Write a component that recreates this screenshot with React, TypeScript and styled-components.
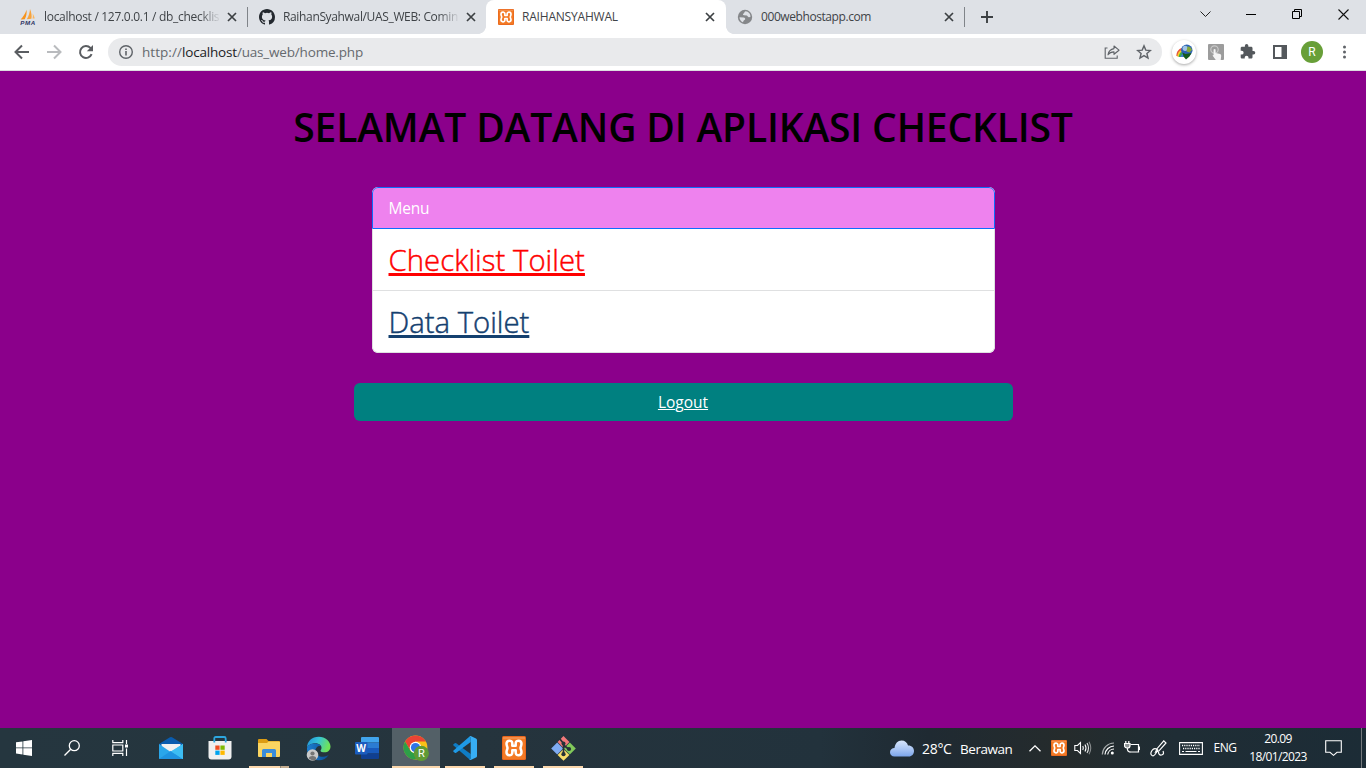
import React from 'react';
import styled, { createGlobalStyle, css } from 'styled-components';

const GlobalStyle = createGlobalStyle`
  * { box-sizing: border-box; }
  body { margin: 0; background: #fff; font-family: 'Open Sans', 'Noto Sans', sans-serif; }
  svg { display: block; flex: none; }
`;

/* ---------- shell ---------- */

const Desktop = styled.div`
  width: 1366px;
  height: 768px;
  display: flex;
  flex-direction: column;
  overflow: hidden;
`;

/* ---------- tab strip ---------- */

const TabStrip = styled.header`
  height: 34px;
  flex: none;
  display: flex;
  background: #dee1e6;
  padding-left: 8px;
`;

const Tab = styled.div<{ $active?: boolean; $divider?: boolean; $width: number }>`
  position: relative;
  width: ${p => p.$width}px;
  height: 34px;
  display: flex;
  align-items: center;
  padding: 0 7px 0 12px;
  ${p => p.$active && css`
    z-index: 1;
    margin-right: -1px;
    background: #fff;
    border-radius: 8px 8px 0 0;
    &::before, &::after {
      content: '';
      position: absolute;
      bottom: 0;
      width: 8px;
      height: 8px;
    }
    &::before { left: -8px; background: radial-gradient(circle at 0 0, #dee1e6 7.6px, #fff 8.2px); }
    &::after { right: -8px; background: radial-gradient(circle at 100% 0, #dee1e6 7.6px, #fff 8.2px); }
  `}
  ${p => p.$divider && css`
    &::after {
      content: '';
      position: absolute;
      right: -1px;
      top: 7px;
      width: 1px;
      height: 20px;
      background: #808489;
    }
  `}
`;

const TabTitle = styled.span<{ $spacing: number; $fade?: boolean }>`
  width: 175px;
  margin-left: 8px;
  margin-right: 5px;
  overflow: hidden;
  white-space: nowrap;
  font-size: 12px;
  line-height: 18px;
  letter-spacing: ${p => p.$spacing}px;
  color: #3f4347;
  ${p => p.$fade && css`
    mask-image: linear-gradient(90deg, #000 155px, transparent 177px);
  `}
`;

const TabClose = styled.span`
  width: 16px;
  height: 16px;
  display: grid;
  place-items: center;
`;

const NewTab = styled.div`
  width: 46px;
  display: grid;
  place-items: center;
`;

const WindowButtons = styled.div`
  margin-left: auto;
  height: 28px;
  display: flex;
`;

const WindowButton = styled.div`
  width: 46px;
  display: grid;
  place-items: center;
`;

/* ---------- toolbar ---------- */

const Toolbar = styled.div`
  height: 37px;
  flex: none;
  display: flex;
  align-items: center;
  background: #fff;
  border-bottom: 1px solid #dcdde0;
  padding: 0 5px 0 6px;
`;

const ToolButton = styled.div`
  width: 32px;
  height: 28px;
  display: grid;
  place-items: center;
`;

const Omnibox = styled.div`
  width: 1054px;
  height: 28px;
  margin: 0 6px;
  display: flex;
  align-items: center;
  border-radius: 14px;
  background: #e9eaec;
  padding: 0 2px 0 10px;
`;

const Url = styled.div`
  flex: 1;
  margin-left: 8px;
  font-size: 13.5px;
  line-height: 20px;
  letter-spacing: -0.18px;
  color: #65696e;
  white-space: nowrap;
`;

const Scheme = styled.span`
  letter-spacing: 0.05px;
`;

const Host = styled.span`
  color: #202124;
`;

const ExtensionDisc = styled.div`
  width: 24px;
  height: 24px;
  border-radius: 50%;
  display: grid;
  place-items: center;
  background: #fff;
  box-shadow: 0 1px 3px rgba(0, 0, 0, 0.35);
`;

const Avatar = styled.div`
  width: 22px;
  height: 22px;
  border-radius: 50%;
  background: #689f38;
  color: #fff;
  font: 400 12px/22px Roboto, sans-serif;
  text-align: center;
`;

/* ---------- page ---------- */

const Page = styled.main`
  flex: 1;
  display: flex;
  flex-direction: column;
  align-items: center;
  background: #8b008b;
  padding-top: 32px;
`;

const Title = styled.h1`
  margin: 0 0 36px;
  font-size: 39px;
  font-weight: 600;
  line-height: 48px;
  letter-spacing: -0.15px;
  color: #000;
  white-space: nowrap;
`;

const MenuList = styled.ul`
  list-style: none;
  width: 623px;
  margin: 0 0 30px;
  padding: 0;
  border-radius: 6px;
  overflow: hidden;
  background: #fff;
`;

const MenuHeader = styled.li`
  height: 42px;
  padding: 8px 16px;
  border: 1px solid #0d6efd;
  border-radius: 6px 6px 0 0;
  background: #ee82ee;
  color: #fff;
  font-size: 15.5px;
  line-height: 25px;
  letter-spacing: -0.25px;
`;

const MenuItem = styled.li`
  height: 62px;
  padding: 9px 16px 7px;
  border: 1px solid #dfe0e1;
  border-top: 0;
  line-height: 45px;
  &:last-child { border-radius: 0 0 6px 6px; }
`;

const MenuLink = styled.a<{ $color: string; $spacing: number }>`
  color: ${p => p.$color};
  font-size: 29.3px;
  font-weight: 300;
  letter-spacing: ${p => p.$spacing}px;
  -webkit-text-stroke: 0.45px ${p => p.$color};
  text-decoration: underline;
  text-decoration-thickness: 3px;
  text-underline-offset: 2px;
  text-decoration-skip-ink: none;
`;

const LogoutButton = styled.button`
  width: 659px;
  height: 38px;
  border: 0;
  border-radius: 6px;
  background: #008080;
  padding: 0 0 1px;
  color: #fff;
  font: 400 15.5px/24px 'Open Sans', sans-serif;
  text-decoration: underline;
  text-decoration-thickness: 1px;
  text-underline-offset: 1px;
`;

/* ---------- taskbar ---------- */

const Taskbar = styled.footer`
  height: 40px;
  flex: none;
  display: flex;
  background: linear-gradient(90deg, #25363f 0%, #25343d 35%, #22323c 60%, #1f2a32 68%, #252b2c 78%, #1f2d35 86%, #1c2c36 100%);
  color: #fff;
`;

const SystemButton = styled.div`
  width: 48px;
  display: grid;
  place-items: center;
`;

const AppStrip = styled.div`
  display: flex;
  gap: 1px;
  margin-left: 3px;
`;

const AppButton = styled.div<{ $open?: boolean; $active?: boolean; $stacked?: boolean }>`
  position: relative;
  width: 48px;
  display: grid;
  place-items: center;
  background: ${p => (p.$active ? '#536067' : 'transparent')};
  ${p => (p.$open || p.$active) && css`
    &::after {
      content: '';
      position: absolute;
      bottom: 0;
      left: ${p.$active ? 0 : 4}px;
      right: ${p.$active ? 0 : 4}px;
      height: 2px;
      background: ${p.$stacked ? 'linear-gradient(90deg, #fbd7ac 31px, #8f8573 31px, #8f8573 32px, #c4ad90 32px)' : '#fbd7ac'};
    }
  `}
`;

const Tray = styled.div`
  margin-left: auto;
  display: flex;
  align-items: center;
`;

const Weather = styled.div`
  width: 135px;
  display: flex;
  align-items: center;
  font-size: 14px;
  line-height: 20px;
  white-space: nowrap;
`;

const Temperature = styled.span`
  width: 38px;
  margin-left: 8px;
  padding-top: 1px;
  letter-spacing: -0.3px;
`;

const Condition = styled.span`
  padding-top: 1px;
  font-size: 13.5px;
  letter-spacing: -0.45px;
`;

const TrayCell = styled.div<{ $width: number }>`
  width: ${p => p.$width}px;
  height: 40px;
  display: grid;
  place-items: center;
`;

const Language = styled.div`
  width: 28px;
  margin-left: 4px;
  font-size: 12px;
  line-height: 16px;
  letter-spacing: -0.5px;
  text-align: center;
`;

const Clock = styled.div`
  width: 78px;
  padding-bottom: 1px;
  font-size: 12px;
  line-height: 18px;
  letter-spacing: -0.6px;
  text-align: center;
`;

const ShowDesktop = styled.div`
  width: 5px;
  height: 40px;
  border-left: 1px solid #74797d;
`;

/* ---------- icons ---------- */

const CloseIcon = () => (
  <svg width="10" height="10" viewBox="0 0 10 10" stroke="#3c4043" strokeWidth="1.7"><path d="M1 1l8 8M9 1L1 9" /></svg>
);

const PmaIcon = () => (
  <svg width="16" height="16" viewBox="0 0 16 16">
    <path d="M6.5 0.8C7 4 6.3 7.5 4.8 10.2L0.6 10.6C3 8 5.5 4.500 6.500 0.800z" fill="#f7941d" />
    <path d="M10 0C11.500 3.500 12 7 11.400 9.700L6.800 10.300C8.800 7 9.800 3.500 10 0z" fill="#f9a33a" />
    <path d="M12.600 4.500C13.700 6.200 14.500 8 14.700 9.500L12.500 9.600C13 7.900 13 6 12.600 4.500z" fill="#fbb65c" />
    <text x="0.200" y="15.600" fontFamily="Liberation Sans" fontSize="6.200" fontWeight="700" fontStyle="italic" textLength="15" fill="#2f3564">PMA</text>
  </svg>
);

const GithubIcon = () => (
  <svg width="16" height="16" viewBox="0 0 16 16" fill="#24292f">
    <path d="M8 0C3.580 0 0 3.580 0 8c0 3.540 2.290 6.530 5.470 7.590.4.070.550-.170.550-.380 0-.190-.010-.820-.010-1.490-2.010.370-2.530-.490-2.690-.940-.090-.230-.480-.940-.820-1.130-.280-.150-.680-.520-.010-.530.630-.010 1.080.580 1.230.820.720 1.210 1.870.870 2.330.660.070-.520.280-.870.510-1.070-1.780-.2-3.640-.890-3.640-3.950 0-.870.310-1.590.820-2.150-.080-.2-.360-1.020.080-2.120 0 0 .670-.210 2.200.820a7.600 7.600 0 0 1 4 0c1.530-1.040 2.200-.820 2.200-.820.440 1.100.160 1.920.080 2.120.510.560.820 1.270.820 2.150 0 3.070-1.870 3.750-3.650 3.950.290.250.540.730.540 1.480 0 1.070-.010 1.930-.010 2.200 0 .210.150.460.550.380A8.010 8.010 0 0 0 16 8c0-4.420-3.580-8-8-8z" />
  </svg>
);

const XamppIcon = ({ size }: { size: number }) => (
  <svg width={size} height={size} viewBox="0 0 24 24">
    <rect width="24" height="24" rx="1.500" fill="#e9661c" />
    <rect x="1" y="1" width="22" height="22" rx="1" fill="#f37a25" />
    <path d="M1 1h22v2H1z" fill="#f39b62" opacity=".6" />
    <path d="M10.300 9.700V7.200C10.300 3.900 4.500 3.900 4.500 7.800C4.500 9.700 5.500 10.500 5.500 12C5.500 13.500 4.500 14.300 4.500 16.200C4.500 20.100 10.300 20.100 10.300 16.800V14.300H13.700V16.800C13.700 20.100 19.500 20.100 19.500 16.200C19.500 14.300 18.500 13.500 18.500 12C18.500 10.500 19.500 9.700 19.500 7.800C19.500 3.900 13.700 3.900 13.700 7.200V9.700z" fill="none" stroke="#fff" strokeWidth="2.500" strokeLinejoin="round" />
  </svg>
);

const GlobeIcon = () => (
  <svg width="16" height="16" viewBox="0 0 16 16">
    <circle cx="8" cy="8" r="7.200" fill="#85878a" />
    <path d="M8.600 2.300C7 3 7.600 4 6.600 4.400C5.600 4.800 5.800 6 7 6.200L9.800 6.600C11 7 10.500 8 11.700 8.200L13.400 8C13.700 5 11.600 2.600 8.600 2.300z" fill="#dee1e6" />
    <path d="M2.500 8.200L6.500 8.400C8 8.600 8.600 9.600 8 10.500C7.500 11.300 6.600 11.200 6.300 12.400L5.900 13.300C3.900 12.500 2.500 10.400 2.500 8.200z" fill="#dee1e6" />
  </svg>
);

const BackIcon = ({ color, flip }: { color: string; flip?: boolean }) => (
  <svg width="16" height="16" viewBox="0 0 16 16" fill="none" stroke={color} strokeWidth="2">
    <path d={flip ? 'M1 8h13M8 1.500L14.500 8L8 14.500' : 'M15 8H2M8 1.500L1.500 8L8 14.500'} />
  </svg>
);

const ReloadIcon = () => (
  <svg width="16" height="16" viewBox="0 0 16 16">
    <path d="M13.600 10.200A6 6 0 1 1 12.400 3.900L14 5.500" fill="none" stroke="#5a5d61" strokeWidth="2" />
    <path d="M15 1v6.200H8.800z" fill="#5a5d61" />
  </svg>
);

const InfoIcon = () => (
  <svg width="16" height="16" viewBox="0 0 16 16">
    <circle cx="8" cy="8" r="6.300" fill="none" stroke="#5f6368" strokeWidth="1.400" />
    <path d="M7.200 7h1.600v4.500H7.200zM7.200 4.400h1.600V6H7.200z" fill="#5f6368" />
  </svg>
);

const ShareIcon = () => (
  <svg width="16" height="16" viewBox="0 0 16 16" fill="none" stroke="#5f6368" strokeWidth="1.100">
    <path d="M3.500 4H1.200v10.300h12V11.500" />
    <path d="M10 2l5 4.200-5 4.100V7.900C7.300 7.900 5.400 8.800 4 10.800C4.500 7.500 6.500 5.200 10 4.600z" strokeLinejoin="round" />
  </svg>
);

const StarIcon = () => (
  <svg width="16" height="16" viewBox="0 0 16 16" fill="none" stroke="#5f6368" strokeWidth="1.400">
    <path d="M8 1.900l1.800 4.200 4.600.4-3.500 3 1.100 4.500L8 11.600 4 14l1.100-4.500-3.500-3 4.600-.4z" />
  </svg>
);

const IdmIcon = () => (
  <svg width="17" height="16" viewBox="0 0 17 16">
    <path d="M.3 12C.5 6.500 4 3.300 9 3.800L8 13z" fill="#e5533c" />
    <path d="M1.300 12.500C1.500 8 4.500 5 9 5.500L8 13z" fill="#f5d327" />
    <path d="M2.700 13C3 9.500 5 7 9 7.300L8 13z" fill="#35a853" />
    <path d="M4.500 13C5 11 6 9.500 9 9.500L8 13z" fill="#3f7fd0" />
    <circle cx="10.800" cy="6.300" r="5.700" fill="#2c63b5" />
    <circle cx="9.200" cy="4.300" r="2.600" fill="#9fc4e6" />
    <path d="M11.500 2.500c2-.5 4 1.500 4.500 3.500l-2.500 2.500-3-1z" fill="#84a83a" />
    <path d="M6.500 8.500l3 1.500 6-1-2 3.500-3.500 3-2.500-3z" fill="#155d1c" />
  </svg>
);

const TouchIcon = () => (
  <svg width="16" height="16" viewBox="0 0 16 16">
    <rect width="16" height="16" rx="1" fill="#9c9c9c" />
    <circle cx="6.500" cy="5.500" r="3.700" fill="none" stroke="#c9c9c9" strokeWidth="1.200" />
    <path d="M5.600 5.500q1-1.200 2 0V9l4.500 1q1.300.4 1.100 2L12.700 16H7.800L4.500 11.600l1.100-.6z" fill="#f4f4f4" />
  </svg>
);

const PuzzleIcon = () => (
  <svg width="16" height="16" viewBox="1 1 23 23" fill="#54585c">
    <path d="M20.500 11H19V7c0-1.100-.9-2-2-2h-4V3.500a2.500 2.500 0 0 0-5 0V5H4c-1.100 0-2 .9-2 2v3.800h1.500a2.700 2.700 0 0 1 0 5.400H2V20c0 1.100.9 2 2 2h3.800v-1.500a2.700 2.700 0 0 1 5.400 0V22H17c1.100 0 2-.9 2-2v-4h1.500a2.500 2.500 0 0 0 0-5z" />
  </svg>
);

const PanelIcon = () => (
  <svg width="14" height="14" viewBox="0 0 14 14">
    <path d="M0 0h14v14H0zM2 2v10h6.500V2z" fill="#54585c" fillRule="evenodd" />
  </svg>
);

const DotsIcon = () => (
  <svg width="4" height="14" viewBox="0 0 4 14" fill="#5f6368">
    <circle cx="2.500" cy="2" r="1.500" /><circle cx="2.500" cy="7" r="1.500" /><circle cx="2.500" cy="12" r="1.500" />
  </svg>
);

const WindowsIcon = () => (
  <svg width="16" height="16" viewBox="0 0 16 16" fill="#fff">
    <path d="M0 2.300l6.500-.9v6.100H0zM7.300 1.300L16 0v7.500H7.300zM0 8.300h6.500v6.200L0 13.600zM7.300 8.300H16V16l-8.700-1.300z" />
  </svg>
);

const SearchIcon = () => (
  <svg width="16" height="16" viewBox="0 0 16 16" fill="none" stroke="#fff" strokeWidth="1.300">
    <circle cx="10.300" cy="5.700" r="5" /><path d="M6.700 9.300L.5 15.500" />
  </svg>
);

const TaskViewIcon = () => (
  <svg width="17" height="16" viewBox="0 0 17 16" fill="none" stroke="#fff" strokeWidth="1.200">
    <path d="M.8 0v2.600h10V0M.8 16v-2.600h10V16M.8 5h10v6H.8zM14.500 0v4M14.500 8.500V16" />
    <path d="M13 4.500h3v3h-3z" fill="#fff" stroke="none" />
  </svg>
);

const MailIcon = () => (
  <svg width="24" height="22" viewBox="0 0 24 22">
    <path d="M0 7L11 .3q1-.6 2 0L24 7v6H0z" fill="#0a5cae" />
    <path d="M2.500 7h19v8h-19z" fill="#f1f1f1" />
    <path d="M0 7l12 8.200L0 22z" fill="#2aa6ea" />
    <path d="M24 7L0 22h24z" fill="#46c8f5" />
    <path d="M0 22h24L12 13.800z" fill="#1f93e0" />
    <path d="M12 14.500L24 7v15z" fill="#3dbdf2" />
  </svg>
);

const StoreIcon = () => (
  <svg width="24" height="24" viewBox="0 0 24 24">
    <path d="M.5 5h23v15.500q0 3-3 3h-17q-3 0-3-3z" fill="#f0f0f0" />
    <path d="M6.300 6.500V2.500q0-1.500 1.500-1.500h8.400q1.500 0 1.500 1.500v4" fill="none" stroke="#2da7e0" strokeWidth="1.800" />
    <path d="M7.300 9.500h4.300v4.300H7.300z" fill="#f04e22" /><path d="M12.400 9.500h4.300v4.300h-4.300z" fill="#7fba00" />
    <path d="M7.300 14.600h4.300v4.300H7.300z" fill="#00a4ef" /><path d="M12.400 14.600h4.300v4.300h-4.300z" fill="#ffb900" />
  </svg>
);

const ExplorerIcon = () => (
  <svg width="22" height="18" viewBox="0 0 22 18">
    <path d="M0 1q0-1 1-1h7.500l2 2H21q1 0 1 1v5H0z" fill="#dd9c12" />
    <path d="M0 4h9l1.500-1.500H21q1 0 1 1V17q0 1-1 1H1q-1 0-1-1z" fill="#fbd561" />
    <path d="M4 18v-6.500q0-1.500 1.500-1.500h11q1.500 0 1.500 1.500V18h-4v-4H8v4z" fill="#3a8ddb" />
  </svg>
);

const EdgeIcon = () => (
  <svg width="25" height="25" viewBox="0 0 25 25">
    <defs>
      <linearGradient id="edgeTop" x1="0" x2="1" y1="0" y2=".3"><stop offset="0" stopColor="#1f8fdb" /><stop offset=".5" stopColor="#36c3d8" /><stop offset="1" stopColor="#6ee35a" /></linearGradient>
      <linearGradient id="edgeLow" x1="0" x2="1"><stop offset="0" stopColor="#1b7fd2" /><stop offset="1" stopColor="#0c4d92" /></linearGradient>
    </defs>
    <path d="M1 12C1 5 6 .7 12.700.7C19.500.7 24.500 5.500 24.500 10.500C24.500 14 22 16.300 18.700 16.300C16.500 16.300 14.500 15.800 14.500 14.800C14.500 14 15.500 13.500 15.500 11.700C15.500 9.500 13 7.300 9.500 7.300C5 7.300 1.500 9.500 1 12z" fill="url(#edgeTop)" />
    <path d="M1 12.300C1.500 9.300 5 7.300 9.500 7.500C12.300 7.600 14.300 8.800 15 10.200C12 9.500 9.300 11.800 9.500 15C9.700 18.800 13.500 21.200 17.500 20.800C19.500 20.600 21.500 19.500 22.800 18.700C20.500 22.500 16.500 24.500 12.700 24.300C6 24 .7 19 1 12.300z" fill="url(#edgeLow)" />
    <circle cx="6.500" cy="19" r="5.800" fill="#c9c9c9" />
    <circle cx="6.500" cy="17.500" r="2.100" fill="#757575" /><path d="M2.800 22.500q0-2.600 3.700-2.600t3.700 2.600-3.700 2z" fill="#757575" />
  </svg>
);

const WordIcon = () => (
  <svg width="24" height="22" viewBox="0 0 24 22">
    <path d="M6 1q0-1 1-1h16q1 0 1 1v4.500H6z" fill="#41a5ee" /><path d="M6 5.500h18V11H6z" fill="#2b7cd3" />
    <path d="M6 11h18v5.500H6z" fill="#185abd" /><path d="M6 16.500h18V21q0 1-1 1H7q-1 0-1-1z" fill="#103f91" />
    <rect y="5" width="12.500" height="12.500" rx="1" fill="#1b5cbe" />
    <text x="6.200" y="14.800" textAnchor="middle" fontFamily="Open Sans" fontWeight="700" fontSize="10" fill="#fff">W</text>
  </svg>
);

const ChromeIcon = () => (
  <svg width="26" height="26" viewBox="0 0 26 26">
    <circle cx="12.500" cy="12.500" r="11.900" fill="#fbc116" />
    <path d="M12.500 6.500h10.400A12 12 0 0 0 2.100 6.500L7.300 15.500z" fill="#ea4335" />
    <path d="M2.100 6.500L7.300 15.500a6 6 0 0 0 9 .8L12.500 24.500A12 12 0 0 1 2.100 6.500z" fill="#2d9f48" />
    <circle cx="12.500" cy="12.500" r="5.800" fill="#fff" /><circle cx="12.500" cy="12.500" r="4.600" fill="#2f74e8" />
    <circle cx="18.300" cy="18.300" r="7.600" fill="#5f9a35" />
    <text x="18.300" y="22.300" textAnchor="middle" fontFamily="Roboto" fontSize="11" fill="#fff">R</text>
  </svg>
);

const VscodeIcon = () => (
  <svg width="24" height="24" viewBox="0 0 24 24">
    <path d="M.5 8.300L1.800 7.200q.7-.5 1.400 0L17.700 18v5.800q-.8 0-1.400-.6L.5 9.600q-.6-.7 0-1.300z" fill="#0f7cc4" />
    <path d="M.5 15.700l1.300 1.100q.7.500 1.400 0L17.700 6V.2q-.8 0-1.400.6L.5 14.400q-.6.700 0 1.300z" fill="#1f9ae6" />
    <path d="M17.700.1L23 2.600q1 .5 1 1.500v15.800q0 1-1 1.500l-5.300 2.500q-1 .3-1.500-.5 1.300.4 1.500-1V1.600q-.2-1.400-1.500-1 .5-.8 1.500-.5z" fill="#37aef4" />
  </svg>
);

const GitIcon = () => (
  <svg width="25" height="25" viewBox="0 0 25 25">
    <path d="M12.500.1l5.900 5.900-5.900 5.900L6.600 6z" fill="#f2797a" /><path d="M6.200 6.400l6 6-6 6-6-6z" fill="#7fabf2" />
    <path d="M18.800 6.400l6 6-6 6-6-6z" fill="#81c95a" /><path d="M12.500 13l5.900 5.900-5.900 5.900-5.900-5.900z" fill="#f7dc6a" />
    <path d="M8.500 2.500l4 5v11M12.500 9l5.500 4.500" stroke="#253138" strokeWidth="1.700" fill="none" />
    <circle cx="12.500" cy="7.500" r="2" fill="#253138" /><circle cx="12.500" cy="18.200" r="2.100" fill="#253138" /><circle cx="18" cy="13" r="2.100" fill="#253138" />
  </svg>
);

const CloudIcon = () => (
  <svg width="24" height="17" viewBox="0 0 24 17">
    <defs><linearGradient id="cloud" x1="0" x2="0" y1="0" y2="1"><stop offset="0" stopColor="#d7e5fb" /><stop offset=".55" stopColor="#a9c5f4" /><stop offset="1" stopColor="#7ba4ea" /></linearGradient></defs>
    <path d="M4.500 16.500C1.800 16.500 0 14.500 0 12.200C0 9.800 2 8 4.500 8C5 3.500 7.800.5 11.500.5C15 .5 17.300 2.500 18 5.500C21.500 5.300 24 7.800 24 11C24 14 21.800 16.500 18.800 16.500z" fill="url(#cloud)" />
  </svg>
);

const VolumeIcon = () => (
  <svg width="18" height="14" viewBox="0 0 18 14" fill="none" stroke="#fff" strokeWidth="1.100">
    <path d="M.8 4.500h2.700L6.500 1.500v11l-3-3H.8z" /><path d="M8.800 5q1 2 0 4M11 3.500q2 3.500 0 7" />
    <path d="M13 2q3 5 0 10" opacity=".85" /><path d="M15 .7q3.500 6.300 0 12.600" opacity=".45" />
  </svg>
);

const WifiIcon = () => (
  <svg width="14" height="14" viewBox="0 0 14 14" fill="none" stroke="#fff" strokeWidth="1.200">
    <path d="M1.300 13.500A12 12 0 0 1 13 2" opacity=".6" /><path d="M4 13.500A9.300 9.300 0 0 1 13 5" />
    <path d="M6.700 13.500A6.500 6.500 0 0 1 13 8" /><circle cx="11.300" cy="12" r="1.500" fill="#fff" stroke="none" />
  </svg>
);

const BatteryIcon = () => (
  <svg width="16" height="14" viewBox="0 0 16 14" fill="none" stroke="#fff" strokeWidth="1.200">
    <path d="M6.500 3.500h8v7.500H5.500M15.500 5.500v3.500" />
    <path d="M.5 2.500h5.500v2.300Q6 7 3.300 7T.5 4.800z" fill="#fff" fillOpacity=".5" /><path d="M1.800 0v2.500M4.800 0v2.500M3.300 7q0 4 3 4" />
  </svg>
);

const PenIcon = () => (
  <svg width="17" height="17" viewBox="0 0 17 17" fill="none" stroke="#fff" strokeWidth="1.200">
    <path d="M13.800.8L16 3 9 10.800l-3.500 1.400L7 8.700z" /><path d="M7.500 9.500Q4 7.500 2 10.500T1.500 15Q3 17 5 14.500T8 9.500M8.500 11.500q0 4 3 3.500T13 11" />
  </svg>
);

const KeyboardIcon = () => (
  <svg width="24" height="13" viewBox="0 0 24 13" fill="none" stroke="#fff">
    <path d="M.6.600h22.800v11.800H.6z" strokeWidth="1.100" />
    <path d="M3 3.500h18M4 6.500h17" strokeWidth="1.300" strokeDasharray="1.200 1" /><path d="M3 9.500h2M6.500 9.500h11M19 9.500h2" strokeWidth="1.100" />
  </svg>
);

const NoticeIcon = () => (
  <svg width="17" height="16" viewBox="0 0 17 16" fill="none" stroke="#fff" strokeWidth="1.100">
    <path d="M.7.700h15.600v11.600H12L8.500 15.300 5 12.300H.7z" />
  </svg>
);

/* ---------- app ---------- */

export default function App() {
  return (
    <>
      <GlobalStyle />
      <Desktop>
        <TabStrip>
          <Tab $width={239} $divider>
            <PmaIcon />
            <TabTitle $spacing={-0.3} $fade>localhost / 127.0.0.1 / db_checklis</TabTitle>
            <TabClose><CloseIcon /></TabClose>
          </Tab>
          <Tab $width={239}>
            <GithubIcon />
            <TabTitle $spacing={-0.35} $fade>RaihanSyahwal/UAS_WEB: Comin</TabTitle>
            <TabClose><CloseIcon /></TabClose>
          </Tab>
          <Tab $width={240} $active>
            <XamppIcon size={16} />
            <TabTitle $spacing={-0.2}>RAIHANSYAHWAL</TabTitle>
            <TabClose><CloseIcon /></TabClose>
          </Tab>
          <Tab $width={239} $divider>
            <GlobeIcon />
            <TabTitle $spacing={-0.42}>000webhostapp.com</TabTitle>
            <TabClose><CloseIcon /></TabClose>
          </Tab>
          <NewTab>
            <svg width="12" height="12" viewBox="0 0 12 12" stroke="#3c4043" strokeWidth="1.900"><path d="M6 0v12M0 6h12" /></svg>
          </NewTab>
          <WindowButtons>
            <WindowButton><svg width="11" height="7" viewBox="0 0 11 7" fill="none" stroke="#222"><path d="M.5.500l5 5 5-5" /></svg></WindowButton>
            <WindowButton><svg width="10" height="1" viewBox="0 0 10 1"><rect width="10" height="1" fill="#000" /></svg></WindowButton>
            <WindowButton><svg width="10" height="10" viewBox="0 0 10 10" fill="none" stroke="#000"><path d="M.5 2.500h7v7h-7zM2.500 2.500v-2h7v7h-2" /></svg></WindowButton>
            <WindowButton><svg width="11" height="11" viewBox="0 0 11 11" fill="none" stroke="#111" strokeWidth="1.100"><path d="M.5.500l10 10M10.500.500l-10 10" /></svg></WindowButton>
          </WindowButtons>
        </TabStrip>

        <Toolbar>
          <ToolButton><BackIcon color="#5a5d61" /></ToolButton>
          <ToolButton><BackIcon color="#b9bbbe" flip /></ToolButton>
          <ToolButton><ReloadIcon /></ToolButton>
          <Omnibox>
            <InfoIcon />
            <Url><Scheme>http://</Scheme><Host>localhost</Host>/uas_web/home.php</Url>
            <ToolButton><ShareIcon /></ToolButton>
            <ToolButton><StarIcon /></ToolButton>
          </Omnibox>
          <ToolButton><ExtensionDisc><IdmIcon /></ExtensionDisc></ToolButton>
          <ToolButton><TouchIcon /></ToolButton>
          <ToolButton><PuzzleIcon /></ToolButton>
          <ToolButton><PanelIcon /></ToolButton>
          <ToolButton><Avatar>R</Avatar></ToolButton>
          <ToolButton><DotsIcon /></ToolButton>
        </Toolbar>

        <Page>
          <Title>SELAMAT DATANG DI APLIKASI CHECKLIST</Title>
          <MenuList>
            <MenuHeader>Menu</MenuHeader>
            <MenuItem><MenuLink $color="#ff0000" $spacing={0.05}>Checklist Toilet</MenuLink></MenuItem>
            <MenuItem><MenuLink $color="#14406f" $spacing={0}>Data Toilet</MenuLink></MenuItem>
          </MenuList>
          <LogoutButton>Logout</LogoutButton>
        </Page>

        <Taskbar>
          <SystemButton><WindowsIcon /></SystemButton>
          <SystemButton><SearchIcon /></SystemButton>
          <SystemButton><TaskViewIcon /></SystemButton>
          <AppStrip>
            <AppButton><MailIcon /></AppButton>
            <AppButton><StoreIcon /></AppButton>
            <AppButton $open $stacked><ExplorerIcon /></AppButton>
            <AppButton><EdgeIcon /></AppButton>
            <AppButton><WordIcon /></AppButton>
            <AppButton $active><ChromeIcon /></AppButton>
            <AppButton $open><VscodeIcon /></AppButton>
            <AppButton $open><XamppIcon size={24} /></AppButton>
            <AppButton $open><GitIcon /></AppButton>
          </AppStrip>
          <Tray>
            <Weather>
              <CloudIcon />
              <Temperature>28°C</Temperature>
              <Condition>Berawan</Condition>
            </Weather>
            <TrayCell $width={20}>
              <svg width="12" height="7" viewBox="0 0 12 7" fill="none" stroke="#fff" strokeWidth="1.300"><path d="M.5 6.300L6 .9l5.500 5.400" /></svg>
            </TrayCell>
            <TrayCell $width={27}><XamppIcon size={16} /></TrayCell>
            <TrayCell $width={22}><VolumeIcon /></TrayCell>
            <TrayCell $width={27}><WifiIcon /></TrayCell>
            <TrayCell $width={21}><BatteryIcon /></TrayCell>
            <TrayCell $width={33}><PenIcon /></TrayCell>
            <TrayCell $width={32}><KeyboardIcon /></TrayCell>
            <Language>ENG</Language>
            <Clock>20.09<br />18/01/2023</Clock>
            <TrayCell $width={32}><NoticeIcon /></TrayCell>
            <TrayCell $width={12} />
            <ShowDesktop />
          </Tray>
        </Taskbar>
      </Desktop>
    </>
  );
}
